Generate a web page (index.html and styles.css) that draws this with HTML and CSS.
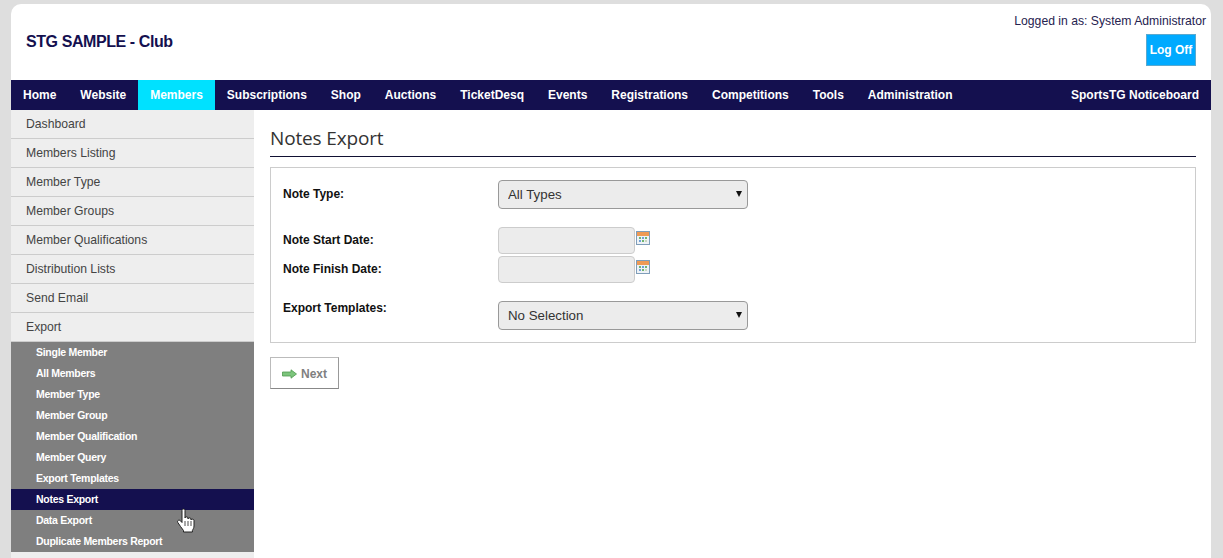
FILE: index.html
```html
<!DOCTYPE html>
<html lang="en">
<head>
  <meta charset="UTF-8">
  <meta name="viewport" content="width=device-width, initial-scale=1.0">
  <title>Notes Export</title>
  <link rel="stylesheet" href="styles.css">
</head>
<body>
  <div class="wrapper">
    <header class="top">
      <div class="club">STG SAMPLE - Club</div>
      <div class="login">
        <div class="login-name">Logged in as: System Administrator</div>
        <a class="logoff" href="#">Log Off</a>
      </div>
    </header>

    <nav class="mainnav">
      <a href="#">Home</a>
      <a href="#">Website</a>
      <a href="#" class="active">Members</a>
      <a href="#">Subscriptions</a>
      <a href="#">Shop</a>
      <a href="#">Auctions</a>
      <a href="#">TicketDesq</a>
      <a href="#">Events</a>
      <a href="#">Registrations</a>
      <a href="#">Competitions</a>
      <a href="#">Tools</a>
      <a href="#">Administration</a>
      <a href="#" class="notice">SportsTG Noticeboard</a>
    </nav>

    <div class="columns">
      <aside class="sidebar">
        <a class="side-link" href="#">Dashboard</a>
        <a class="side-link" href="#">Members Listing</a>
        <a class="side-link" href="#">Member Type</a>
        <a class="side-link" href="#">Member Groups</a>
        <a class="side-link" href="#">Member Qualifications</a>
        <a class="side-link" href="#">Distribution Lists</a>
        <a class="side-link" href="#">Send Email</a>
        <a class="side-link" href="#">Export</a>
        <div class="submenu">
          <a href="#">Single Member</a>
          <a href="#">All Members</a>
          <a href="#">Member Type</a>
          <a href="#">Member Group</a>
          <a href="#">Member Qualification</a>
          <a href="#">Member Query</a>
          <a href="#">Export Templates</a>
          <a href="#" class="current">Notes Export</a>
          <a href="#">Data Export</a>
          <a href="#">Duplicate Members Report</a>
        </div>
        <!-- mouse pointer from the screenshot -->
        <svg class="pointer" width="18" height="25" viewBox="0 0 18 25">
          <path d="M5 2.500c0-2 3-2 3 0V10c0-1.500 3-1.500 3 0v1c0-1.500 3-1.500 3 0v1c0-1.200 3-1.200 3 .5V18c0 2-1 3-1.600 4.500V24H6.500v-1.500C4.500 20 2.500 17 .8 14.500c-1-1.700 1.200-3.200 2.700-1.700L5 14.500z" fill="#fff" stroke="#222" stroke-width="1"/>
          <path d="M8 13v5M11 13v5M14 13v5" stroke="#222" stroke-width=".8" fill="none"/>
        </svg>
      </aside>

      <main class="content">
        <h1 class="page-title">Notes Export</h1>

        <form class="panel">
          <div class="row row-type">
            <label class="field-label">Note Type:</label>
            <span class="select-wrap">
              <select class="field-select"><option>All Types</option></select>
            </span>
          </div>
          <div class="row row-date">
            <label class="field-label">Note Start Date:</label>
            <input class="field-date" type="text">
            <svg class="cal" width="14" height="14" viewBox="0 0 14 14">
              <rect x=".5" y=".5" width="13" height="13" fill="#eef2f6" stroke="#7f9db9"/>
              <rect x="1" y="1" width="12" height="4" fill="#ee9a55"/>
              <path d="M3 6h2v2H3zM9 6h2v2H9zM6 9h2v2H6z" fill="#6fb56f"/>
              <path d="M6 6h2v2H6zM3 9h2v2H3z" fill="#6f9fd8"/>
              <path d="M9 9h2v2H9z" fill="#c9d6c0"/>
            </svg>
          </div>
          <div class="row row-date">
            <label class="field-label">Note Finish Date:</label>
            <input class="field-date" type="text">
            <svg class="cal" width="14" height="14" viewBox="0 0 14 14">
              <rect x=".5" y=".5" width="13" height="13" fill="#eef2f6" stroke="#7f9db9"/>
              <rect x="1" y="1" width="12" height="4" fill="#ee9a55"/>
              <path d="M3 6h2v2H3zM9 6h2v2H9zM6 9h2v2H6z" fill="#6fb56f"/>
              <path d="M6 6h2v2H6zM3 9h2v2H3z" fill="#6f9fd8"/>
              <path d="M9 9h2v2H9z" fill="#c9d6c0"/>
            </svg>
          </div>
          <div class="row row-template">
            <label class="field-label">Export Templates:</label>
            <span class="select-wrap">
              <select class="field-select"><option>No Selection</option></select>
            </span>
          </div>
        </form>

        <button class="next-btn" type="button">
          <svg width="15" height="10" viewBox="0 0 15 10">
            <path d="M.5 3h8.500V.8L14.500 5 9 9.200V7H.5z" fill="#7cc47c" stroke="#4e9a4e" stroke-width=".8"/>
          </svg>
          Next
        </button>
      </main>
    </div>
  </div>
</body>
</html>
```
FILE: styles.css
```css
html, body {
  height: 100%;
  overflow: hidden;
}
body {
  margin: 0;
  padding-top: 4px;
  box-sizing: border-box;
  background-color: #dedede;
  font-family: "Liberation Sans", Arial, sans-serif;
  font-size: 12px;
  color: #222;
}
a {
  text-decoration: none;
}
.wrapper {
  width: 1200px;
  height: 554px;
  margin-left: 11px;
  background-color: #fff;
  border-radius: 10px 10px 0 0;
  display: flex;
  flex-direction: column;
}

/* Header */
.top {
  height: 76px;
  display: flex;
  justify-content: space-between;
  flex-shrink: 0;
}
.club {
  margin: 29px 0 0 15px;
  font-size: 16px;
  letter-spacing: -0.42px;
  line-height: 18px;
  font-weight: bold;
  color: #14104f;
}
.login {
  display: flex;
  flex-direction: column;
  align-items: flex-end;
  padding: 10px 5px 0 0;
}
.login-name {
  font-size: 12.200px;
  line-height: 15px;
  color: #26224f;
}
.logoff {
  margin: 5px 10px 0 0;
  width: 50px;
  height: 32px;
  box-sizing: border-box;
  line-height: 30px;
  text-align: center;
  background-color: #00aaff;
  border: 1px solid #5aa9cf;
  color: #fff;
  font-weight: bold;
}

/* Main nav */
.mainnav {
  height: 30px;
  display: flex;
  flex-shrink: 0;
  background-color: #14104f;
}
.mainnav a {
  padding: 0 12px;
  line-height: 30px;
  font-weight: bold;
  color: #fff;
}
.mainnav a.active {
  background-color: #00e1ff;
}
.mainnav a.notice {
  margin-left: auto;
}

.columns {
  flex: 1;
  display: flex;
  min-height: 0;
}

/* Side menu */
.sidebar {
  width: 243px;
  flex-shrink: 0;
  position: relative;
  background-color: #eee;
}
.side-link {
  display: block;
  height: 28px;
  line-height: 28px;
  padding-left: 15px;
  border-bottom: 1px solid #ccc;
  font-size: 12.200px;
  color: #444;
}
.submenu {
  background-color: #7f7f7f;
}
.submenu a {
  display: block;
  height: 21px;
  line-height: 21px;
  padding-left: 25px;
  font-size: 10.500px;
  letter-spacing: -0.28px;
  font-weight: bold;
  color: #fff;
}
.submenu a.current {
  background-color: #14104f;
}
.pointer {
  position: absolute;
  left: 166px;
  top: 398px;
}

/* Content */
.content {
  flex: 1;
  padding: 0 15px 0 16px;
}
.page-title {
  margin: 16px 0 10px;
  padding-bottom: 6px;
  height: 24px;
  line-height: 24px;
  font-family: "Open Sans", sans-serif;
  font-size: 19px;
  letter-spacing: -0.15px;
  font-weight: normal;
  color: #333;
  border-bottom: 1px solid #111133;
}
.panel {
  height: 176px;
  box-sizing: border-box;
  border: 1px solid #ccc;
  padding: 12px 12px 0;
  margin-bottom: 14px;
}
.row {
  display: flex;
  align-items: flex-start;
}
.field-label {
  width: 215px;
  flex-shrink: 0;
  font-weight: bold;
  color: #111;
  line-height: 14px;
}
.row-type .field-label {
  padding-top: 7px;
}
.row-date {
  height: 29px;
}
.row-date .field-label {
  padding-top: 6px;
}
.row-type {
  margin-bottom: 18px;
}
.row-template {
  margin-top: 16px;
}
.select-wrap {
  position: relative;
  display: block;
}
.select-wrap::after {
  content: "";
  position: absolute;
  right: 6px;
  top: 11px;
  border-left: 3.500px solid transparent;
  border-right: 3.500px solid transparent;
  border-top: 6px solid #111;
}
.field-select {
  appearance: none;
  display: block;
  width: 250px;
  height: 29px;
  padding: 0 9px;
  background-color: #ececec;
  border: 1px solid #999;
  border-radius: 4px;
  font-family: inherit;
  font-size: 13.300px;
  color: #333;
}
.field-date {
  width: 137px;
  height: 27px;
  box-sizing: border-box;
  background-color: #ececec;
  border: 1px solid #ccc;
  border-radius: 4px;
}
.cal {
  margin: 4px 0 0 1px;
}
.next-btn {
  width: 69px;
  height: 32px;
  padding: 2px 0 0;
  display: flex;
  align-items: center;
  justify-content: center;
  gap: 4px;
  background-color: #fff;
  border: 1px solid #bbb;
  border-bottom-color: #888;
  border-right-color: #999;
  font-family: inherit;
  font-size: 12px;
  font-weight: bold;
  color: #808080;
}
```
